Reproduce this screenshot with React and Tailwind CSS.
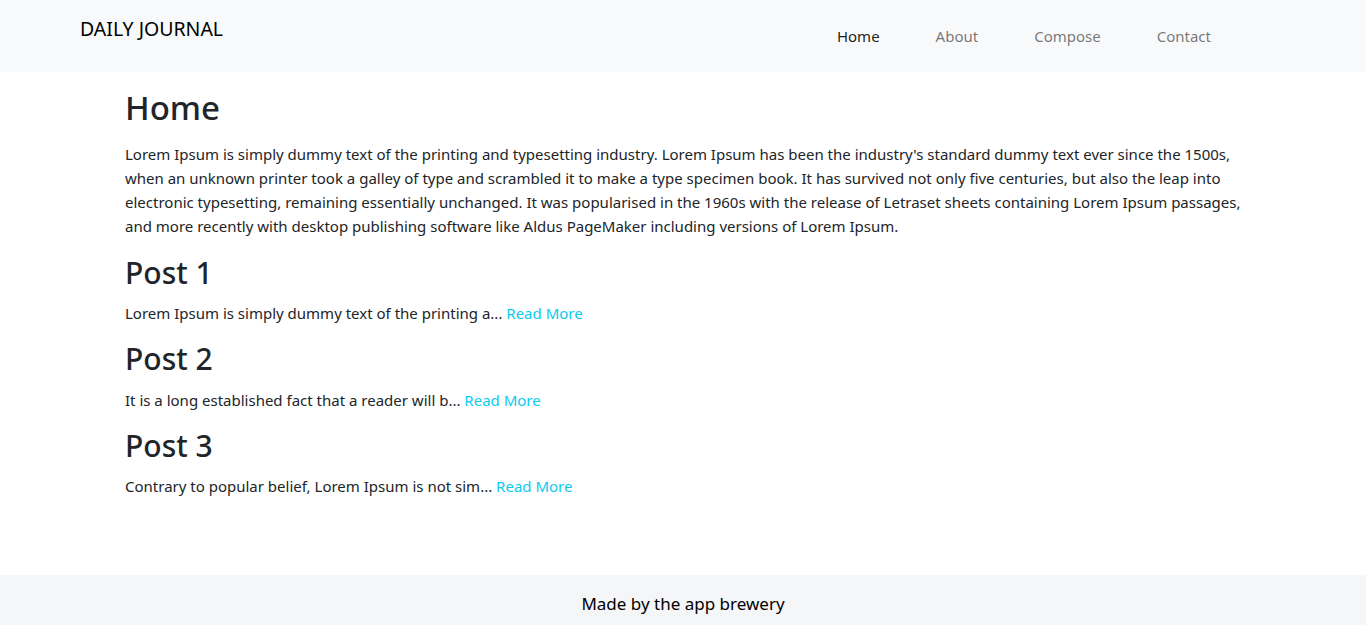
const posts = [
  { title: 'Post 1', excerpt: 'Lorem Ipsum is simply dummy text of the printing a...' },
  { title: 'Post 2', excerpt: 'It is a long established fact that a reader will b...' },
  { title: 'Post 3', excerpt: 'Contrary to popular belief, Lorem Ipsum is not sim...' },
];

const homeText =
  "Lorem Ipsum is simply dummy text of the printing and typesetting industry. Lorem Ipsum has been the industry's standard dummy text ever since the 1500s, when an unknown printer took a galley of type and scrambled it to make a type specimen book. It has survived not only five centuries, but also the leap into electronic typesetting, remaining essentially unchanged. It was popularised in the 1960s with the release of Letraset sheets containing Lorem Ipsum passages, and more recently with desktop publishing software like Aldus PageMaker including versions of Lorem Ipsum.";

export default function App() {
  const links = ['Home', 'About', 'Compose', 'Contact'];

  return (
    <div className="min-h-screen flex flex-col bg-white text-[#212529] font-['Noto_Sans',sans-serif]">
      <nav className="h-[72px] shrink-0 bg-[#f8f9fa] flex justify-between pl-[80px] pr-[127px]">
        <div className="pt-[16px] text-[19.5px] leading-[26px] text-black">DAILY JOURNAL</div>
        <ul className="flex pt-[24px]">
          {links.map((l, i) => (
            <li key={l}>
              <a
                href="#"
                className={
                  'block px-[28px] text-[15px] leading-[24px] ' +
                  (i === 0 ? 'text-black/90' : 'text-black/55')
                }
              >
                {l}
              </a>
            </li>
          ))}
        </ul>
      </nav>

      <main className="flex-1">
        <div className="max-w-[1140px] mx-auto px-[12px] pt-[16px]">
          <h1 className="text-[33px] leading-[40px] font-medium mb-[14px]">Home</h1>
          <p className="text-[15px] leading-[24px] mb-[16px]">{homeText}</p>

          {posts.map((p) => (
            <div key={p.title}>
              <h2 className="text-[30px] leading-[38.4px] font-medium mb-[9px]">{p.title}</h2>
              <p className="text-[15px] leading-[24px] mb-[15px]">
                {p.excerpt}{' '}
                <a href="#" className="text-[#0dcaf0]">Read More</a>
              </p>
            </div>
          ))}
        </div>
      </main>

      <footer className="h-[50px] shrink-0 bg-[#f5f6f8] flex items-center justify-center pt-[8px]">
        <p className="text-[17px] text-black">Made by the app brewery</p>
      </footer>
    </div>
  );
}
